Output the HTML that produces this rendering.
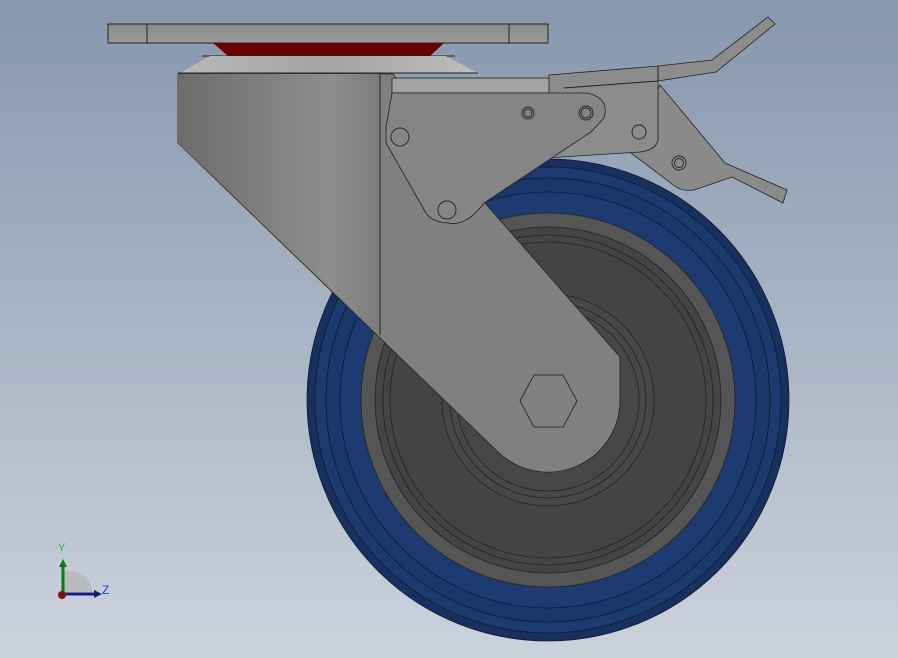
<!DOCTYPE html>
<html><head><style>html,body{margin:0;padding:0;width:898px;height:658px;overflow:hidden}</style></head>
<body>
<svg width="898" height="658" viewBox="0 0 898 658" xmlns="http://www.w3.org/2000/svg">
<defs>
<linearGradient id="bg" x1="0" y1="0" x2="0" y2="1"><stop offset="0" stop-color="#8797ad"/><stop offset="1" stop-color="#ccd2dc"/></linearGradient>
<linearGradient id="lp" x1="0" y1="0" x2="1" y2="0"><stop offset="0" stop-color="#6c6c6c"/><stop offset="0.75" stop-color="#8e8e8e"/><stop offset="1" stop-color="#7c7c7c"/></linearGradient>
<linearGradient id="pl" x1="0" y1="0" x2="0" y2="1"><stop offset="0" stop-color="#8a8a8a"/><stop offset="1" stop-color="#9a9a9a"/></linearGradient>
<linearGradient id="wa" x1="0" y1="0" x2="1" y2="0"><stop offset="0" stop-color="#b8b8b8"/><stop offset="0.5" stop-color="#a4a4a4"/><stop offset="1" stop-color="#bdbdbd"/></linearGradient>
</defs>
<rect width="898" height="658" fill="url(#bg)"/>
<!-- wheel -->
<g stroke="#0b1a33" stroke-width="0.8">
<circle cx="548" cy="400" r="241" fill="#17305e"/>
<circle cx="548" cy="400" r="233" fill="#1c3a6e"/>
<circle cx="548" cy="400" r="222" fill="#1b386b"/>
<circle cx="548" cy="400" r="208" fill="#1d3b70"/>
<circle cx="548" cy="400" r="187" fill="#555555" stroke="#222"/>
<circle cx="548" cy="400" r="173" fill="#444444" stroke="#222"/>
<circle cx="548" cy="400" r="165" fill="#444444" stroke="#222"/>
<circle cx="548" cy="400" r="158" fill="#444444" stroke="#222"/>
<circle cx="548" cy="400" r="106" fill="#474747" stroke="#222"/>
<circle cx="548" cy="400" r="98" fill="#474747" stroke="#222"/>
<circle cx="548" cy="400" r="91" fill="#474747" stroke="#222"/>
</g>
<!-- top plate, red cone, washer -->
<rect x="108" y="24" width="440" height="19" fill="url(#pl)" stroke="#222" stroke-width="1"/>
<line x1="147" y1="24" x2="147" y2="43" stroke="#222"/>
<line x1="509" y1="24" x2="509" y2="43" stroke="#222"/>
<path d="M213,43 L444,43 L430,56 L228,56 Z" fill="#6a0000"/>
<line x1="202" y1="56" x2="455" y2="56" stroke="#222"/>
<path d="M210,56 L446,56 L478,73 L180,73 Z" fill="url(#wa)"/>
<line x1="178" y1="73" x2="478" y2="73" stroke="#222"/>
<!-- yoke -->
<path d="M178,74 L393,74 L470,180 L485,203 L620,357 L620,400 A72,72 0 0 1 497,451 L178,143 Z" fill="#808080" stroke="#222" stroke-width="0.8"/>
<path d="M178,74 L380,74 L380,335 L178,143 Z" fill="url(#lp)"/>
<line x1="380" y1="74" x2="380" y2="335" stroke="#222"/>
<!-- hex bolt -->
<polygon points="520,401 534,375 563,375 577,401 563,427 534,427" fill="#808080" stroke="#222" stroke-width="0.8"/>
<!-- lever / pedal -->
<path d="M660,85 L725,163 L787,190 L783,203 L732,177 L694,190 Q680,192 671,183 L627,150 Z" fill="#8a8a8a" stroke="#222" stroke-width="0.8"/>
<path d="M549,75 L658,66 L712,60 L768,17 L775,24 L716,72 L658,81 L658,140 Q656,150 640,152 L546,158 Z" fill="#8c8c8c" stroke="#222" stroke-width="0.8"/>
<line x1="564" y1="88" x2="658" y2="81" stroke="#222"/>
<line x1="658" y1="66" x2="658" y2="81" stroke="#222"/>
<!-- bracket -->
<rect x="392" y="78" width="157" height="15" fill="#a2a2a2" stroke="#222" stroke-width="0.8"/>
<path d="M392,93 L587,93 Q610,98 604,118 L591,132 L484,203 Q466,227 448,223 Q432,222 426,213 L386,143 L386,127 Z" fill="#858585" stroke="#222" stroke-width="0.8"/>
<g fill="none" stroke="#222" stroke-width="0.9">
<circle cx="400" cy="137" r="9"/>
<circle cx="447" cy="210" r="9"/>
<circle cx="528" cy="113" r="6"/><circle cx="528" cy="113" r="4"/>
<circle cx="586" cy="113" r="7"/><circle cx="586" cy="113" r="5"/>
<circle cx="639" cy="132" r="7"/>
<circle cx="679" cy="163" r="7"/><circle cx="679" cy="163" r="4.5"/>
</g>
<!-- axis triad -->
<path d="M64,592 L64,572 A22,22 0 0 1 92,592 Z" fill="#b8babe"/>
<line x1="63" y1="594" x2="63" y2="566" stroke="#0a7a0a" stroke-width="3"/>
<polygon points="59,567 67,567 63,559" fill="#0a7a0a"/>
<line x1="63" y1="594" x2="95" y2="594" stroke="#13207a" stroke-width="3"/>
<polygon points="94,590 94,598 102,594" fill="#13207a"/>
<circle cx="62" cy="595" r="4" fill="#8a0e0e"/>
<text x="58" y="551" font-family="Liberation Sans, sans-serif" font-size="11" fill="#19c019">Y</text>
<text x="102" y="594" font-family="Liberation Sans, sans-serif" font-size="12" fill="#2a3ad0">Z</text>
</svg>
</body></html>
